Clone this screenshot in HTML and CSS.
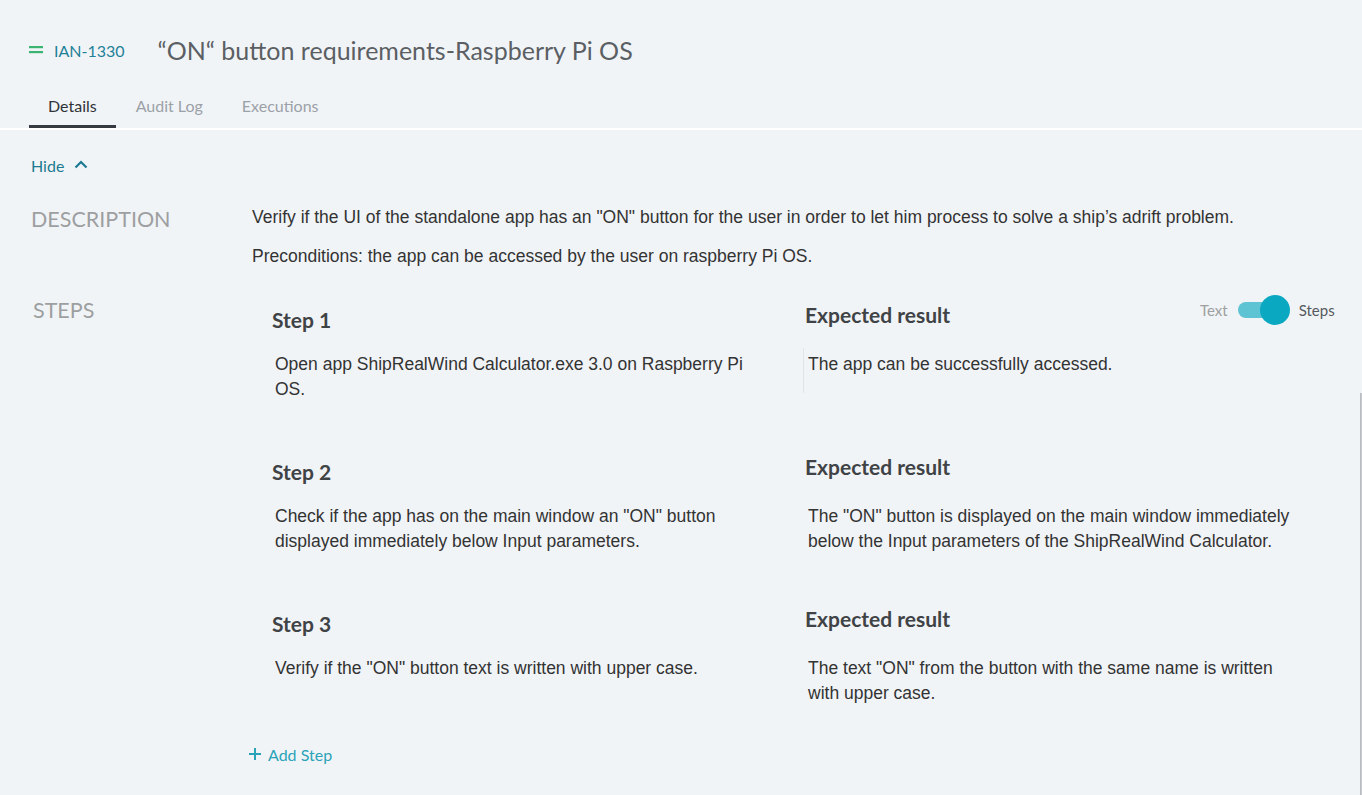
FILE: index.html
```html
<!DOCTYPE html>
<html lang="en">
<head>
<meta charset="utf-8">
<title>IAN-1330</title>
<link rel="stylesheet" href="styles.css">
</head>
<body>
<div class="page">
  <header class="head">
    <svg class="prio" width="14" height="10" viewBox="0 0 14 10"><rect x="0" y="1" width="14" height="2.2" fill="#3cb371"/><rect x="0" y="6" width="14" height="2.2" fill="#3cb371"/></svg>
    <span class="key">IAN-1330</span>
    <h1 class="title">“ON“ button requirements-Raspberry Pi OS</h1>
  </header>

  <nav class="tabs">
    <a class="tab active">Details</a>
    <a class="tab">Audit Log</a>
    <a class="tab">Executions</a>
  </nav>

  <div class="hide">
    <span>Hide</span>
    <svg width="14" height="9" viewBox="0 0 14 9"><path d="M1.5 7.5 L7 2 L12.5 7.5" fill="none" stroke="#1d7a90" stroke-width="2.2"/></svg>
  </div>

  <section class="row desc">
    <div class="label">DESCRIPTION</div>
    <div class="desc-body">
      <p>Verify if the UI of the standalone app has an "ON" button for the user in order to let him process to solve a ship’s adrift problem.</p>
      <p>Preconditions: the app can be accessed by the user on raspberry Pi OS.</p>
    </div>
  </section>

  <section class="row steps">
    <div class="label steps-label">STEPS</div>
    <div class="steps-main">
      <div class="step">
        <div class="col">
          <div class="h">Step 1</div>
          <div class="t">Open app ShipRealWind Calculator.exe 3.0 on Raspberry Pi OS.</div>
        </div>
        <div class="col exp">
          <div class="h">Expected result</div>
          <div class="t edit">The app can be successfully accessed.</div>
        </div>
      </div>
      <div class="step">
        <div class="col">
          <div class="h">Step 2</div>
          <div class="t">Check if the app has on the main window an "ON" button displayed immediately below Input parameters.</div>
        </div>
        <div class="col exp">
          <div class="h">Expected result</div>
          <div class="t">The "ON" button is displayed on the main window immediately below the Input parameters of the ShipRealWind Calculator.</div>
        </div>
      </div>
      <div class="step step-last">
        <div class="col">
          <div class="h">Step 3</div>
          <div class="t">Verify if the "ON" button text is written with upper case.</div>
        </div>
        <div class="col exp">
          <div class="h">Expected result</div>
          <div class="t">The text "ON" from the button with the same name is written with upper case.</div>
        </div>
      </div>
      <div class="add-step">
        <svg width="14" height="14" viewBox="0 0 14 14"><path d="M7 1 V13 M1 7 H13" stroke="#2aa3b8" stroke-width="2" fill="none"/></svg>
        <span>Add Step</span>
      </div>
    </div>
    <div class="toggle">
      <span class="off">Text</span>
      <span class="switch"><span class="knob"></span></span>
      <span class="on">Steps</span>
    </div>
  </section>
</div>
<div class="scroll-edge"></div>
</body>
</html>
```

FILE: styles.css
```css
html, body {
  margin: 0;
  padding: 0;
  background: #f1f4f7;
}
body {
  font-family: "Liberation Sans", Arial, sans-serif;
  color: #333;
  overflow: hidden;
  height: 795px;
}
.page {
  width: 1362px;
}
.head {
  display: flex;
  align-items: center;
  height: 40px;
  margin-top: 30px;
  padding-left: 29px;
}
.prio {
  display: block;
  margin-right: 11px;
}
.key {
  font-family: Lato, sans-serif;
  font-size: 16px;
  color: #1f8198;
  margin-right: 33px;
}
.title {
  margin: 0;
  font-family: Lato, sans-serif;
  font-weight: 400;
  font-size: 25px;
  color: #5b5f64;
}
.tabs {
  display: flex;
  margin-top: 18px;
  padding-left: 29px;
  border-bottom: 2px solid #ffffff;
  height: 42px;
  box-sizing: border-box;
}
.tab {
  font-family: Lato, sans-serif;
  font-size: 16px;
  color: #9ba1a7;
  padding: 0 19px;
  line-height: 36px;
  height: 40px;
  box-sizing: border-box;
}
.tab + .tab {
  padding-left: 20px;
}
.tab.active {
  color: #2f3338;
  border-bottom: 3px solid #343a40;
}
.hide {
  display: flex;
  align-items: center;
  gap: 10px;
  margin: 25px 0 0 31px;
  height: 20px;
  font-family: Lato, sans-serif;
  font-size: 16px;
  color: #1d7a90;
}
.hide svg {
  display: block;
  margin-top: -1px;
}
.row {
  display: flex;
}
.label {
  flex: none;
  width: 252px;
  padding-left: 31px;
  box-sizing: border-box;
  font-family: Lato, sans-serif;
  font-size: 21.5px;
  color: #9d9fa1;
  line-height: 24px;
}
.desc {
  margin-top: 31px;
}
.desc .label {
  padding-top: 1px;
}
.desc-body p {
  margin: 0 0 17px;
  font-size: 17.5px;
  line-height: 22px;
  color: #333;
}
.steps {
  position: relative;
  margin-top: 14px;
}
.steps-label {
  padding-left: 33px;
}
.step {
  display: grid;
  grid-template-columns: 533px 500px;
  height: 152px;
  padding-left: 20px;
}
.step.step-last {
  height: 142px;
}
.col .h {
  font-family: Lato, sans-serif;
  font-weight: 700;
  font-size: 21px;
  line-height: 24px;
  color: #404346;
  height: 54px;
  padding-top: 10px;
  box-sizing: border-box;
}
.col.exp .h {
  padding-top: 5px;
}
.col .t {
  font-size: 17.5px;
  line-height: 25px;
  color: #333;
  padding-left: 3px;
  width: 482px;
}
.col.exp .t {
  width: 492px;
  padding-left: 3px;
}
.col.exp .t.edit {
  margin-left: -2px;
  padding-left: 4px;
  border-left: 1px solid #e2e5e8;
  padding-bottom: 16px;
  margin-top: -4px;
  padding-top: 4px;
}
.add-step {
  display: flex;
  align-items: center;
  gap: 6px;
  margin-left: -4px;
  height: 20px;
  font-family: Lato, sans-serif;
  font-size: 16px;
  color: #2aa3b8;
}
.add-step svg {
  display: block;
}
.toggle {
  position: absolute;
  top: -4px;
  left: 1200px;
  display: flex;
  align-items: center;
  height: 32px;
  font-family: Lato, sans-serif;
  font-size: 15px;
}
.toggle .off {
  color: #9d9fa1;
}
.toggle .on {
  color: #555a5f;
}
.switch {
  position: relative;
  width: 52px;
  height: 16px;
  margin: 0 9px 0 10px;
}
.switch::before {
  content: "";
  position: absolute;
  left: 0;
  top: 0;
  width: 44px;
  height: 16px;
  border-radius: 8px;
  background: #5ec3d3;
}
.knob {
  position: absolute;
  left: 22px;
  top: -7px;
  width: 30px;
  height: 30px;
  border-radius: 50%;
  background: #0aa8c1;
}
.scroll-edge {
  position: fixed;
  right: 0;
  top: 393px;
  bottom: 0;
  width: 2px;
  background: #c6c9cd;
  border-left: 1px solid #b9bcc0;
  box-sizing: border-box;
}
```
